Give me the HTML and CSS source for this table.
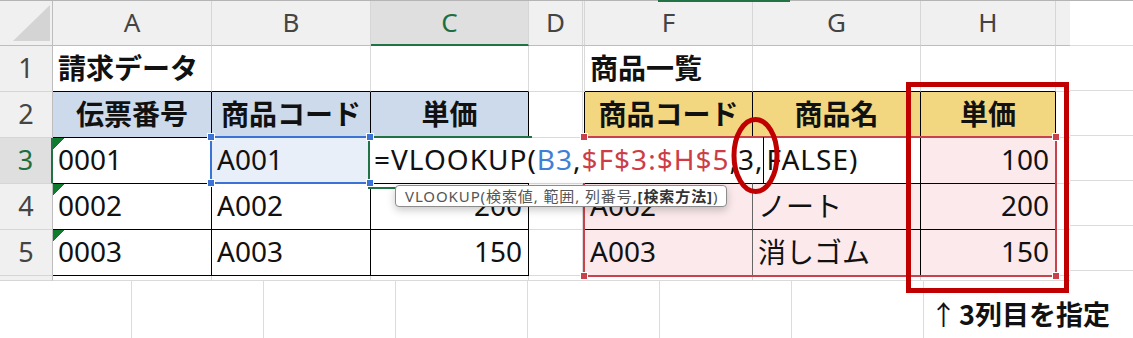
FILE: index.html
```html
<!DOCTYPE html>
<html lang="ja">
<head>
<meta charset="utf-8">
<title>VLOOKUP</title>
<link rel="stylesheet" href="styles.css">
</head>
<body>
<div class="page">
  <div class="top">
    <div class="sheet">
      <div class="corner"><svg width="52" height="44" viewBox="0 0 52 44"><polygon points="13,40 50,40 50,4" fill="#d4d4d4"/></svg></div>
      <div class="ch">A</div><div class="ch">B</div><div class="ch sel">C</div><div class="ch">D</div><div class="ch e"></div><div class="ch">F</div><div class="ch">G</div><div class="ch">H</div><div class="ch x"></div>

      <div class="rh">1</div>
      <div class="c tb hb">請求データ</div><div class="c tb"></div><div class="c tb"></div><div class="c"></div><div class="c e"></div>
      <div class="c tb hb">商品一覧</div><div class="c tb"></div><div class="c tb"></div><div class="c x"></div>

      <div class="rh">2</div>
      <div class="c t hd blue">伝票番号</div><div class="c t hd blue">商品コード</div><div class="c t hd blue">単価</div><div class="c"></div><div class="c e tr"></div>
      <div class="c t hd yel">商品コード</div><div class="c t hd yel">商品名</div><div class="c t hd yel">単価</div><div class="c x"></div>

      <div class="rh sel">3</div>
      <div class="c t err">0001</div><div class="c t bsel">A001</div><div class="c t"></div><div class="c"></div><div class="c e tr"></div>
      <div class="c t pk fg"></div><div class="c t pk"></div><div class="c t pk num">100</div><div class="c x"></div>

      <div class="rh">4</div>
      <div class="c t err">0002</div><div class="c t">A002</div><div class="c t num">200</div><div class="c"></div><div class="c e tr"></div>
      <div class="c t pk fg">A002</div><div class="c t pk">ノート</div><div class="c t pk num">200</div><div class="c x"></div>

      <div class="rh">5</div>
      <div class="c t err">0003</div><div class="c t">A003</div><div class="c t num">150</div><div class="c"></div><div class="c e tr"></div>
      <div class="c t pk fg">A003</div><div class="c t pk">消しゴム</div><div class="c t pk num">150</div><div class="c x"></div>

      <div class="rh"></div>
      <div class="c"></div><div class="c"></div><div class="c"></div><div class="c"></div><div class="c e"></div>
      <div class="c"></div><div class="c"></div><div class="c"></div><div class="c x"></div>
    </div>
    <div class="side"></div>
  </div>
  <div class="bottom">
    <div class="bcol"></div><div class="bcol"></div><div class="bcol"></div><div class="bcol"></div><div class="bcol"></div><div class="bcol"></div><div class="bcol"></div>
  </div>

  <div class="gtop"></div>

  <div class="rng rng-r">
    <span class="h tl"></span><span class="h trc"></span><span class="h bl"></span><span class="h br"></span>
  </div>
  <div class="rng rng-b">
    <span class="h tl"></span><span class="h trc"></span><span class="h bl"></span><span class="h br"></span>
  </div>

  <div class="edit"><span>=VLOOKUP(</span><span class="ref1">B3</span><span>,</span><span class="ref2">$F$3:$H$5</span><span>,3,</span><span class="cur"></span><span>FALSE)</span></div>

  <div class="tip">VLOOKUP(検索値, 範囲, 列番号, <b>[検索方法]</b>)</div>

  <svg class="circ" width="1133" height="338" viewBox="0 0 1133 338"><ellipse cx="755.5" cy="155.5" rx="21.5" ry="36" fill="none" stroke="#c00000" stroke-width="5"/></svg>
  <div class="mark"></div>
  <div class="note"><span class="arr">↑</span>3列目を指定</div>
</div>
</body>
</html>
```

FILE: styles.css
```css
* { box-sizing: border-box; }

body {
  margin: 0;
  background: #fff;
  font-family: "Noto Sans", "Noto Sans CJK JP", sans-serif;
}

.page {
  position: relative;
  width: 1133px;
  height: 338px;
  overflow: hidden;
}

.top {
  display: flex;
  height: 281px;
  border-top: 1px solid #b4b4b4;
}

.sheet {
  display: grid;
  width: 1070px;
  grid-template-columns: 53px 159px 159px 158px 54px 2px 168px 168px 135px 14px;
  grid-template-rows: 45px repeat(5, 46px) 5px;
}

.side {
  flex: 1;
  background: repeating-linear-gradient(to bottom, transparent 0 44px, #dcdcdc 44px 45px);
}

.bottom {
  display: flex;
  height: 57px;
}

.bcol {
  width: 132px;
  flex: none;
  border-right: 1px solid #dcdcdc;
}

/* headers */
.corner {
  background: #f0f0f0;
  border-right: 1px solid #bdbdbd;
  border-bottom: 1px solid #bdbdbd;
}
.corner svg { display: block; }

.ch {
  background: #f0f0f0;
  border-right: 1px solid #d6d6d6;
  border-bottom: 1px solid #bdbdbd;
  display: flex;
  align-items: center;
  justify-content: center;
  font-size: 26px;
  color: #444;
  padding-bottom: 2px;
}
.ch.sel {
  background: #dfdfdf;
  color: #1d6f42;
  border-bottom: 2px solid #217346;
}
.ch.x { border-right: 0; }

.rh {
  background: #f0f0f0;
  border-right: 1px solid #bdbdbd;
  border-bottom: 1px solid #d6d6d6;
  display: flex;
  align-items: center;
  justify-content: center;
  font-size: 27px;
  color: #444;
  padding-bottom: 3px;
}
.rh.sel {
  background: #dfdfdf;
  color: #1d6f42;
  border-right: 2px solid #217346;
}

/* cells */
.c {
  border-right: 1px solid #dadada;
  border-bottom: 1px solid #dadada;
  display: flex;
  align-items: center;
  padding: 0 5px 4px;
  font-size: 28px;
  color: #111;
  white-space: nowrap;
  overflow: hidden;
  background-color: #fff;
}
.c.e { padding: 0; }
.c.x { border-right: 0; }

.tb { border-bottom-color: #000; }
.tr { border-right-color: #000; }
.t { border-right-color: #000; border-bottom-color: #000; }
.fg { border-right-color: #666; }

.hb { font-weight: 700; }
.hd { font-weight: 700; justify-content: center; }
.blue { background-color: #ccdaeb; }
.yel { background-color: #f2d680; }
.pk { background-color: #fbe9eb; }
.bsel { background-color: #e9eff9; }
.num { justify-content: flex-end; padding-right: 6px; }
.err { background-image: linear-gradient(135deg, #0f7b2c 0 8px, transparent 8px); }

/* overlays */
.gtop {
  position: absolute;
  left: 658px;
  top: 0;
  width: 132px;
  height: 2px;
  background: #217346;
  z-index: 4;
}

.rng { position: absolute; }
.rng-r {
  left: 583px;
  top: 136px;
  width: 474px;
  height: 141px;
  border: 2px solid #c8414b;
}
.rng-b {
  left: 210px;
  top: 136px;
  width: 161px;
  height: 48px;
  border: 2px solid #3a72d6;
}
.h {
  position: absolute;
  width: 8px;
  height: 8px;
  border: 1px solid #fff;
  z-index: 5;
}
.rng-r .h { background: #c8414b; }
.rng-b .h { background: #3a72d6; }
.tl { left: -5px; top: -5px; }
.trc { right: -5px; top: -5px; }
.bl { left: -5px; bottom: -5px; }
.br { right: -5px; bottom: -5px; }

.edit {
  position: absolute;
  left: 368px;
  top: 138px;
  width: 552px;
  height: 45px;
  background: #fff;
  display: flex;
  align-items: center;
  padding: 0 0 4px 6px;
  font-size: 28px;
  letter-spacing: 1px;
  color: #111;
  white-space: nowrap;
  z-index: 3;
}
.edit::before {
  content: "";
  position: absolute;
  left: 0;
  top: -2px;
  width: 162px;
  height: 49px;
  border: 2px solid #217346;
  border-right: 0;
}
.ref1 { color: #3f7fd6; }
.ref2 { color: #cc3d47; }
.cur {
  align-self: stretch;
  width: 1px;
  margin: -1px 2px -4px 0;
  background: #000;
}

.tip {
  position: absolute;
  left: 395px;
  top: 185px;
  width: 332px;
  height: 22px;
  border: 1px solid #8c8c8c;
  border-radius: 4px;
  background: #fff;
  box-shadow: 0 3px 8px rgba(0, 0, 0, 0.22);
  font-size: 15px;
  letter-spacing: 0.9px;
  color: #555;
  display: flex;
  align-items: center;
  padding: 0 0 1px 9px;
  white-space: nowrap;
  z-index: 6;
}
.tip b { color: #333; }

.circ {
  position: absolute;
  left: 0;
  top: 0;
  z-index: 7;
}

.mark {
  position: absolute;
  left: 906px;
  top: 82px;
  width: 163px;
  height: 211px;
  border: 5px solid #c00000;
  z-index: 7;
}

.note {
  position: absolute;
  left: 930px;
  top: 300px;
  font-family: "Noto Sans CJK JP", sans-serif;
  font-size: 27px;
  line-height: 27px;
  font-weight: 700;
  color: #111;
  white-space: nowrap;
  z-index: 7;
}
.arr { font-weight: 400; margin-right: 2px; }
```
